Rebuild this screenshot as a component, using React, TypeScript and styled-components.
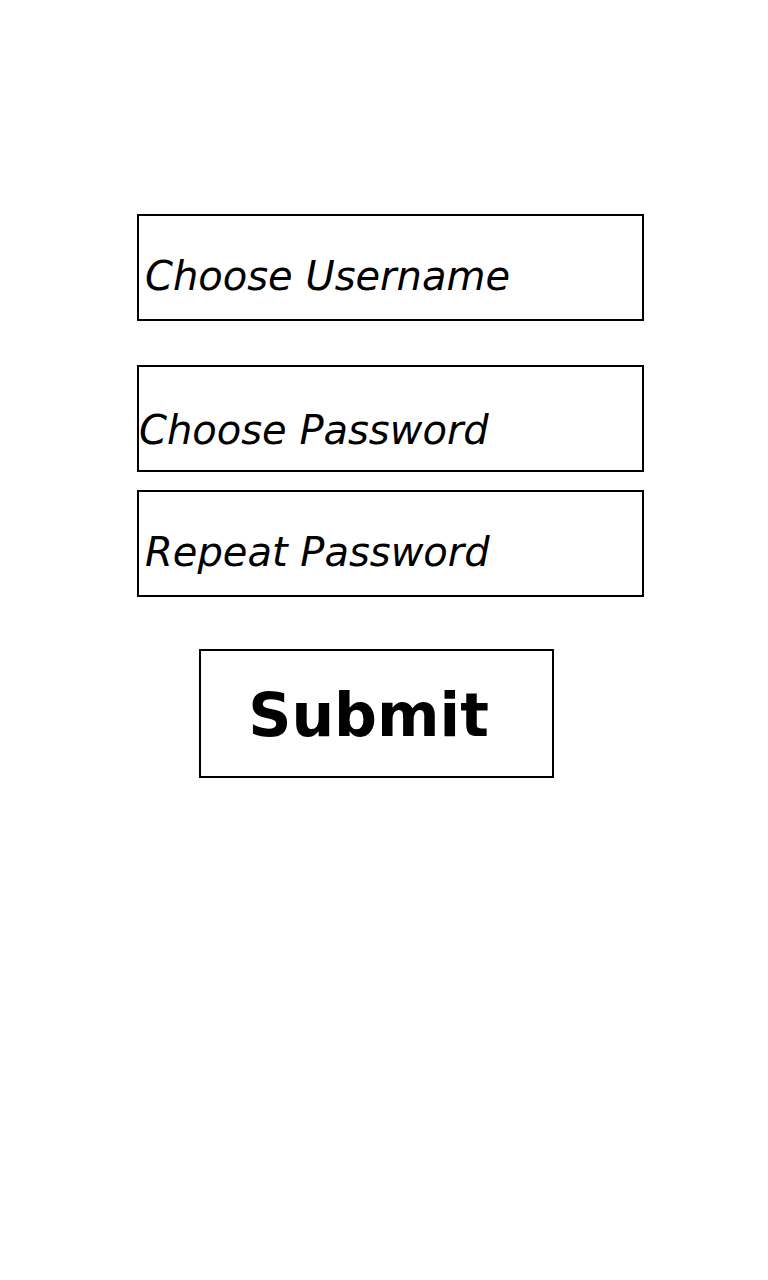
import React from "react";
import styled, { createGlobalStyle } from "styled-components";

const GlobalStyle = createGlobalStyle`
  html, body {
    margin: 0;
    padding: 0;
    background: #fff;
  }
  body {
    font-family: "DejaVu Sans", "Liberation Sans", sans-serif;
    color: #000;
  }
`;

const fields = [
  { label: "Choose Username", inset: 6, drop: 23, gapAfter: 44 },
  { label: "Choose Password", inset: 0, drop: 20, gapAfter: 18 },
  { label: "Repeat Password", inset: 6, drop: 23, gapAfter: 52 },
];

const App = () => {
  return (
    <>
      <GlobalStyle />
      <Form>
        {fields.map(({ label, inset, drop, gapAfter }) => (
          <Field key={label} $inset={inset} $drop={drop} $gap={gapAfter}>
            <Label>{label}</Label>
          </Field>
        ))}
        <SubmitButton type="button">Submit</SubmitButton>
      </Form>
    </>
  );
};

export default App;

const Form = styled.div`
  display: flex;
  flex-direction: column;
  align-items: flex-start;
  padding: 214px 0 0 137px;
  min-height: 1280px;
  box-sizing: border-box;
`;

const Field = styled.div<{ $inset: number; $drop: number; $gap: number }>`
  width: 507px;
  height: 107px;
  box-sizing: border-box;
  border: 2px solid #000;
  display: flex;
  align-items: flex-end;
  padding: 0 0 ${(p) => p.$drop}px ${(p) => p.$inset}px;
  margin-bottom: ${(p) => p.$gap}px;
`;

const Label = styled.span`
  font-size: 40px;
  line-height: 40px;
  font-style: italic;
  white-space: pre;
`;

const SubmitButton = styled.button`
  margin-left: 62px;
  width: 355px;
  height: 129px;
  box-sizing: border-box;
  border: 2.5px solid #000;
  background: #fff;
  font-family: "DejaVu Sans", sans-serif;
  font-weight: bold;
  font-size: 60px;
  color: #000;
  padding: 2px 16px 0 0;
  white-space: pre;
  cursor: pointer;
`;
